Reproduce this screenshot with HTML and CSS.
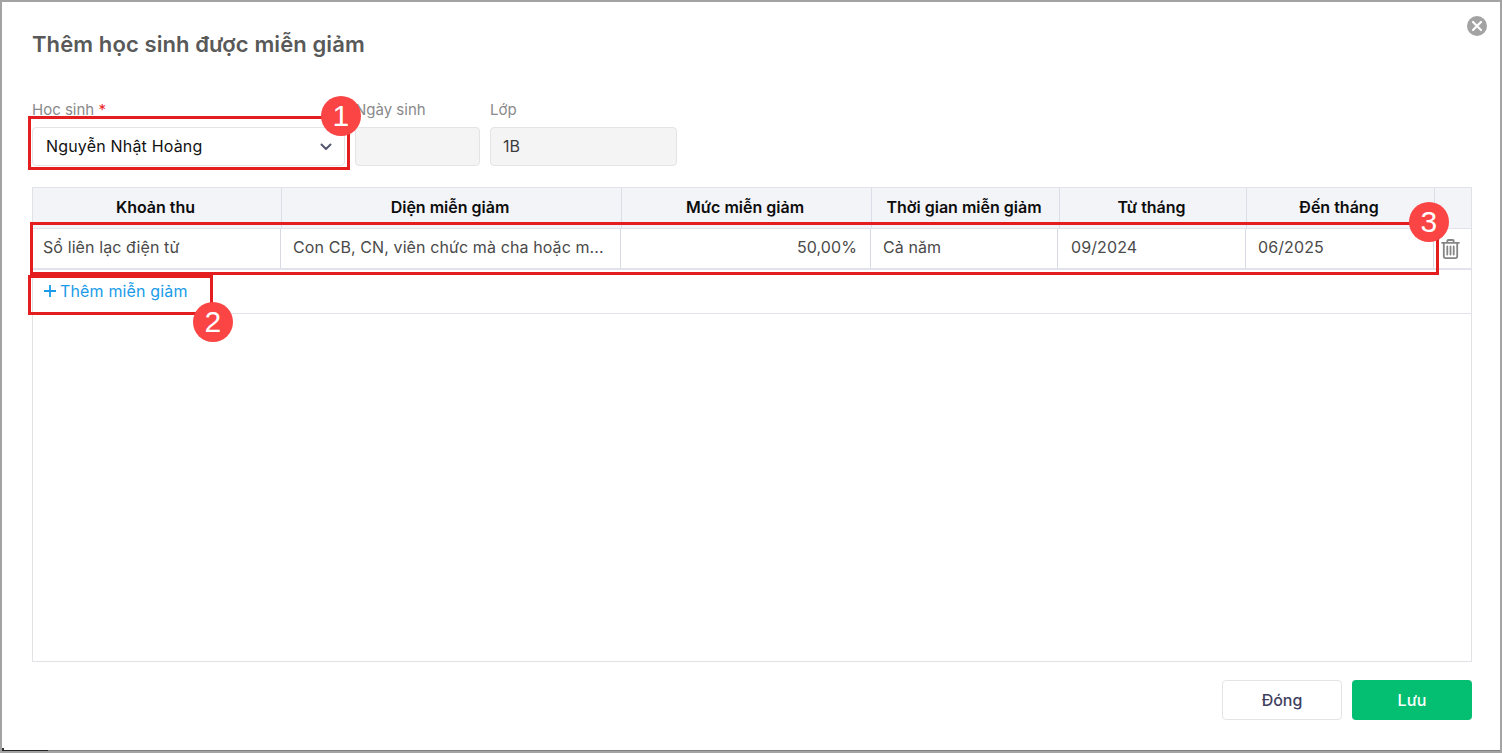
FILE: index.html
```html
<!DOCTYPE html>
<html lang="vi">
<head>
<meta charset="utf-8">
<title>Thêm học sinh được miễn giảm</title>
<link rel="stylesheet" href="styles.css">
</head>
<body>
<div class="dialog">
  <button class="close" aria-label="Đóng">
    <svg width="20" height="20" viewBox="0 0 20 20"><circle cx="10" cy="10" r="10" fill="#a3a3a3"/><path d="M6 6l8 8M14 6l-8 8" stroke="#fff" stroke-width="2.2" stroke-linecap="round"/></svg>
  </button>
  <h1 class="title">Thêm học sinh được miễn giảm</h1>
  <div class="form-row">
    <div class="field field-student">
      <label class="label">Học sinh <span class="req">*</span></label>
      <div class="input select">
        <span>Nguyễn Nhật Hoàng</span>
        <svg width="12" height="8" viewBox="0 0 12 8"><path d="M1.5 1.500L6 6l4.500-4.500" fill="none" stroke="#55566f" stroke-width="2" stroke-linecap="round" stroke-linejoin="round"/></svg>
      </div>
    </div>
    <div class="field field-dob">
      <label class="label">Ngày sinh</label>
      <div class="input readonly"></div>
    </div>
    <div class="field field-class">
      <label class="label">Lớp</label>
      <div class="input readonly">1B</div>
    </div>
  </div>
  <div class="table">
    <div class="thead">
      <div class="th">Khoản thu</div>
      <div class="th">Diện miễn giảm</div>
      <div class="th">Mức miễn giảm</div>
      <div class="th">Thời gian miễn giảm</div>
      <div class="th">Từ tháng</div>
      <div class="th">Đến tháng</div>
      <div class="th"></div>
    </div>
    <div class="trow">
      <div class="td">Sổ liên lạc điện tử</div>
      <div class="td">Con CB, CN, viên chức mà cha hoặc m...</div>
      <div class="td num">50,00%</div>
      <div class="td">Cả năm</div>
      <div class="td td-month">09/2024</div>
      <div class="td">06/2025</div>
      <div class="td-action">
        <svg width="19" height="20" viewBox="0 0 19 20" fill="none" stroke="#858585" stroke-width="1.8" stroke-linecap="round" stroke-linejoin="round"><path d="M1 3.800h17M6.300 3.800V2c0-.6.4-1 1-1h4.400c.6 0 1 .4 1 1v1.800M2.800 3.800v13.500c0 1 .8 1.800 1.800 1.800h9.800c1 0 1.800-.8 1.800-1.800V3.800"/><path d="M6.300 7.500v8M9.500 7.500v8M12.700 7.500v8"/></svg>
      </div>
    </div>
    <div class="add-row">
      <a class="add-link"><svg width="12" height="12" viewBox="0 0 12 12"><path d="M6 0v12M0 6h12" stroke="#1a9be8" stroke-width="1.8"/></svg>Thêm miễn giảm</a>
    </div>
  </div>
  <div class="footer">
    <button class="btn btn-close">Đóng</button>
    <button class="btn btn-save">Lưu</button>
  </div>
  <div class="mark mark-1"></div>
  <div class="mark mark-2"></div>
  <div class="mark mark-3"></div>
  <div class="badge badge-1">1</div>
  <div class="badge badge-2">2</div>
  <div class="badge badge-3">3</div>
</div>
</body>
</html>
```
FILE: styles.css
```css
* { box-sizing: border-box; }
html, body { margin: 0; height: 100%; }
body {
  width: 1502px;
  height: 753px;
  overflow: hidden;
  background: #a3a3a3;
  padding: 2px 2px 3px 2px;
  font-family: Inter, "Liberation Sans", sans-serif;
  letter-spacing: 0.1px;
}
.dialog {
  position: relative;
  width: 1498px;
  height: 748px;
  background: #fff;
  box-shadow: 0 1px 0 #808080;
  padding: 0 28px 0 30px;
  display: flex;
  flex-direction: column;
}
.dialog::after {
  content: "";
  position: absolute;
  left: 0;
  bottom: -1px;
  width: 46px;
  height: 1px;
  background: #222;
}
.dialog::before {
  content: "";
  position: absolute;
  left: 0;
  bottom: 0;
  width: 2px;
  height: 2px;
  background: #333;
}
.close {
  position: absolute;
  top: 14px;
  right: 13px;
  width: 20px;
  height: 20px;
  border: 0;
  padding: 0;
  background: none;
  line-height: 0;
}
.title {
  margin: 28px 0 0;
  height: 28px;
  font-size: 22px;
  line-height: 28px;
  font-weight: 600;
  color: #595959;
}
.form-row {
  display: flex;
  gap: 10px;
  margin-top: 42px;
  height: 66px;
}
.field { display: flex; flex-direction: column; }
.field-student { width: 313px; }
.field-dob { width: 125px; }
.field-class { width: 187px; }
.label {
  font-size: 15px;
  line-height: 17px;
  height: 27px;
  padding-top: 1px;
  letter-spacing: 0;
  color: #8a8a8a;
}
.req { color: #e8262a; }
.input {
  height: 39px;
  border: 1px solid #e4e4e7;
  border-radius: 4px;
  font-size: 16px;
  line-height: 37px;
  padding: 0 12px;
  color: #3c3c3c;
}
.select {
  display: flex;
  align-items: center;
  justify-content: space-between;
  color: #111;
  letter-spacing: 0.18px;
  padding: 0 12px 0 13px;
}
.readonly { background: #f4f4f5; }
.table {
  margin-top: 21px;
  height: 475px;
  border: 1px solid #e2e2e6;
  border-top: 1px solid #e2e3ea;
}
.thead, .trow {
  display: grid;
  grid-template-columns: 249px 340px 250px 188px 187px 188px 1fr;
}
.thead {
  height: 40px;
  background: #f3f4f8;
}
.th {
  border-right: 1px solid #dcdde6;
  font-size: 16px;
  font-weight: 600;
  line-height: 39px;
  letter-spacing: 0;
  text-align: center;
  padding-right: 3px;
  color: #0d0d0d;
}
.th:last-child { border-right: 0; }
.trow {
  grid-template-columns: 248px 340px 250px 187px 188px 188px 1fr;
  height: 42px;
  border-top: 1px solid #e2e3ea;
  border-bottom: 2px solid #e2e3ea;
}
.td {
  border-right: 1px solid #d8d9e4;
  padding: 0 10px;
  font-size: 16px;
  line-height: 36px;
  color: #4a4a4a;
  white-space: nowrap;
}
.td:nth-child(2), .td:nth-child(4), .td:nth-child(6) { padding-left: 12px; padding-right: 0; }
.td-month { padding-left: 13px; padding-right: 0; }
.num { text-align: right; padding-right: 13px; }
.td-action {
  display: flex;
  align-items: center;
  justify-content: center;
  padding-right: 5px;
}
.add-row {
  height: 44px;
  border-bottom: 1px solid #e2e3ea;
  display: flex;
  align-items: center;
  padding-left: 11px;
  padding-bottom: 2px;
}
.add-link {
  display: flex;
  align-items: center;
  gap: 4px;
  font-size: 16px;
  letter-spacing: 0.15px;
  color: #1a9be8;
}
.footer {
  display: flex;
  justify-content: flex-end;
  gap: 10px;
  margin-top: 18px;
}
.btn {
  width: 120px;
  height: 40px;
  border-radius: 4px;
  font: 500 16px Inter, "Liberation Sans", sans-serif;
}
.btn-close { background: #fff; border: 1px solid #e4e4e7; color: #3f3f5f; }
.btn-save { background: #04bf72; border: 0; color: #fff; }
.mark {
  position: absolute;
  border: 3px solid #e41e1e;
  pointer-events: none;
}
.mark-1 { left: 26px; top: 114px; width: 322px; height: 54px; }
.mark-2 { left: 26px; top: 273px; width: 185px; height: 40px; }
.mark-3 { left: 28px; top: 220px; width: 1409px; height: 53px; }
.badge {
  position: absolute;
  width: 40px;
  height: 40px;
  border-radius: 50%;
  background: #fb4444;
  color: #fff;
  font: 400 30px/40px "Liberation Sans", sans-serif;
  text-align: center;
}
.badge-1 { left: 319px; top: 94px; }
.badge-2 { left: 191px; top: 300px; }
.badge-3 { left: 1407px; top: 200px; }
```
